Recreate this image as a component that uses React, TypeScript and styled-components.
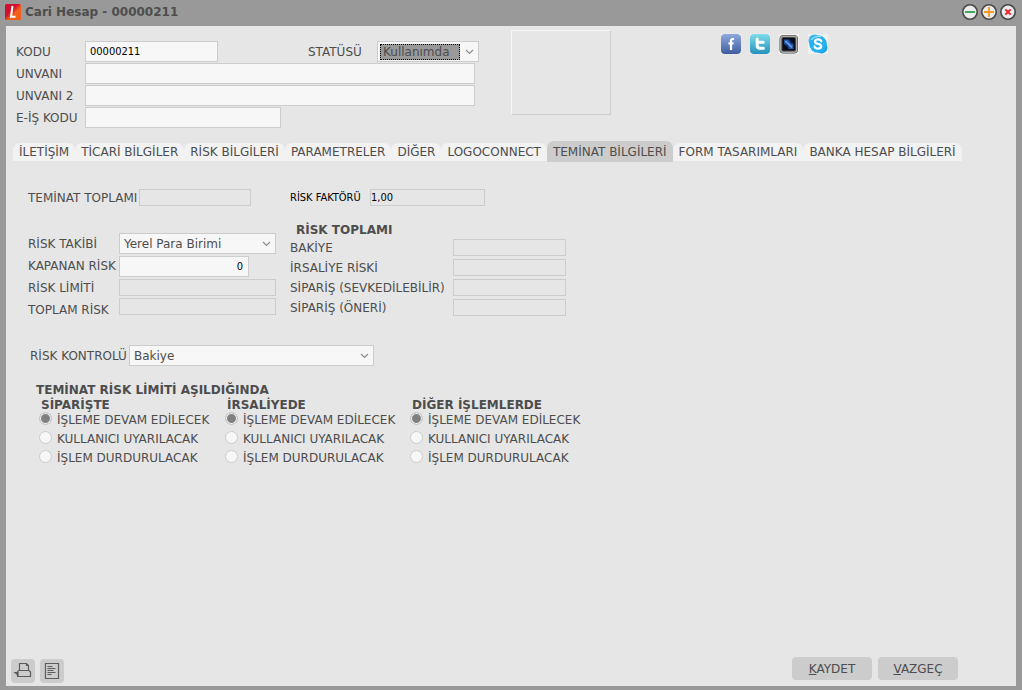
import React from "react";
import styled, { createGlobalStyle } from "styled-components";

const GlobalStyle = createGlobalStyle`
  *, *::before, *::after { box-sizing: border-box; }
  body {
    margin: 0;
    background: #999999;
    color: #4d4d4d;
    font-family: Verdana, "DejaVu Sans", sans-serif;
    font-size: 12px;
    line-height: 16px;
  }
  button, input, select { font: inherit; color: inherit; margin: 0; }
`;

const Window = styled.div`
  display: flex;
  flex-direction: column;
  min-height: 100vh;
  padding: 0 6px 4px;
`;

const TitleBar = styled.header`
  display: flex;
  align-items: center;
  gap: 4px;
  height: 26px;
  padding-bottom: 2px;
  margin-left: -1px;
`;

const Title = styled.h1`
  flex: 1;
  margin: 0;
  font-size: 12px;
  font-weight: bold;
`;

const WindowControls = styled.div`
  display: flex;
  gap: 3px;
`;

const ControlButton = styled.button`
  display: block;
  width: 16px;
  height: 16px;
  padding: 0;
  border: 0;
  background: none;
  svg { display: block; }
`;

const Body = styled.main`
  flex: 1;
  display: flex;
  flex-direction: column;
  background: #e6e6e6;
`;

const Header = styled.section`
  display: flex;
  align-items: flex-start;
  padding: 4px 10px 0;
`;

const Identity = styled.div`
  display: flex;
  flex-direction: column;
  gap: 1px;
  width: 463px;
  margin-top: 11px;
`;

const IdentityRow = styled.div`
  display: flex;
  align-items: center;
`;

const Label = styled.label<{ $width?: number; $compact?: boolean }>`
  flex: none;
  width: ${(p) => (p.$width ? `${p.$width}px` : "auto")};
  white-space: nowrap;
  ${(p) => p.$compact && `color: #000; font-family: Tahoma, "DejaVu Sans Condensed", sans-serif; font-size: 11px;`}
`;

const TextInput = styled.input<{ $width: number }>`
  display: block;
  width: ${(p) => p.$width}px;
  height: 21px;
  padding: 0 4px;
  border: 1px solid #cccccc;
  border-radius: 0;
  outline: 0;
  background: #f7f7f7;
  color: #000;
  font-family: Tahoma, "DejaVu Sans Condensed", sans-serif;
  font-size: 11px;
`;

const AmountInput = styled(TextInput)`
  padding: 0 5px;
  text-align: right;
`;

const LockedInput = styled(TextInput)`
  height: 17px;
  padding: 0;
  background: #e6e6e6;
`;

const SelectBox = styled.div<{ $width: number }>`
  display: flex;
  align-items: center;
  width: ${(p) => p.$width}px;
  height: 21px;
  padding: 2px 4px 2px 2px;
  border: 1px solid #cccccc;
  background: #f7f7f7;
`;

const NativeSelect = styled.select<{ $active?: boolean }>`
  flex: 1;
  min-width: 0;
  height: 16px;
  padding: 0 2px;
  appearance: none;
  border: ${(p) => (p.$active ? "1px dotted #000" : "0")};
  border-radius: 0;
  outline: 0;
  background: ${(p) => (p.$active ? "#999999" : "transparent")};
  line-height: 14px;
`;

const Chevron = styled.svg`
  flex: none;
  margin-left: 5px;
`;

const StatusLabel = styled(Label)`
  margin-left: 90px;
`;

const PictureFrame = styled.div`
  width: 100px;
  height: 85px;
  margin-left: 32px;
  border: 1px solid;
  border-color: #f7f7f7 #cccccc #cccccc #f7f7f7;
`;

const SocialLinks = styled.nav`
  display: flex;
  gap: 9px;
  margin: 4px 0 0 110px;
  a, svg { display: block; }
`;

const TabBar = styled.div`
  display: flex;
  align-items: flex-end;
  margin: 13px 7px 0;
`;

const Tab = styled.button<{ $active?: boolean }>`
  height: ${(p) => (p.$active ? 21 : 18)}px;
  margin-bottom: ${(p) => (p.$active ? 0 : 1)}px;
  padding: 0 6px;
  border: 0;
  border-radius: 7px 7px 0 0;
  background: ${(p) => (p.$active ? "#cccccc" : "#f2f2f2")};
  white-space: nowrap;
`;

const Panel = styled.section`
  padding: 27px 22px 0;
`;

const Columns = styled.div`
  display: grid;
  grid-template-columns: 262px auto;
  justify-content: start;
  row-gap: 17px;
`;

const InlineField = styled.div`
  display: flex;
  align-items: center;
`;

const Pair = styled.div<{ $labels: number }>`
  display: grid;
  grid-template-columns: ${(p) => p.$labels}px auto;
  justify-content: start;
`;

const LabelStack = styled.div<{ $pitch: number }>`
  display: grid;
  grid-auto-rows: ${(p) => p.$pitch}px;
  align-content: start;
  align-items: center;
`;

const FieldStack = styled.div<{ $gap: number }>`
  display: flex;
  flex-direction: column;
  gap: ${(p) => p.$gap}px;
`;

const RiskTracking = styled(Pair)`
  margin-top: 10px;
`;

const Totals = styled(Pair)`
  ${FieldStack} { padding-top: 1px; }
`;

const Heading = styled.h2`
  margin: 0;
  padding-left: 6px;
  font-size: 12px;
  font-weight: bold;
  line-height: 15px;
`;

const RiskControl = styled(InlineField)`
  margin: 24px 0 0 2px;
`;

const LimitSection = styled.div`
  margin: 17px 0 0 2px;
`;

const OptionColumns = styled.div`
  display: grid;
  grid-template-columns: 186px 185px auto;
  justify-content: start;
  padding-left: 9px;
`;

const OptionGroup = styled.fieldset`
  min-width: 0;
  margin: 0;
  padding: 0;
  border: 0;
`;

const Legend = styled.legend`
  padding: 0 2px;
  font-weight: bold;
  line-height: 14px;
`;

const Option = styled.label`
  display: flex;
  align-items: flex-start;
  gap: 5px;
  height: 19px;
  white-space: nowrap;
`;

const Radio = styled.input`
  flex: none;
  width: 13px;
  height: 13px;
  appearance: none;
  border: 1px solid #cccccc;
  border-radius: 50%;
  background: #f7f7f7;
  &:checked {
    background: #808080;
    box-shadow: inset 0 0 0 1px #f7f7f7;
  }
`;

const Footer = styled.footer`
  display: flex;
  justify-content: space-between;
  align-items: flex-end;
  margin-top: auto;
  padding: 0 58px 3px 5px;
`;

const ButtonRow = styled.div<{ $gap: number }>`
  display: flex;
  gap: ${(p) => p.$gap}px;
`;

const IconButton = styled.button`
  display: flex;
  width: 24px;
  height: 24px;
  padding: 0;
  border: 0;
  border-radius: 4px;
  background: #cccccc;
`;

const ActionButton = styled.button`
  width: 80px;
  height: 23px;
  margin-bottom: 3px;
  padding: 0;
  border: 0;
  border-radius: 4px;
  background: #cccccc;
  text-align: center;
`;

const tabs = [
  "İLETİŞİM",
  "TİCARİ BİLGİLER",
  "RİSK BİLGİLERİ",
  "PARAMETRELER",
  "DİĞER",
  "LOGOCONNECT",
  "TEMİNAT BİLGİLERİ",
  "FORM TASARIMLARI",
  "BANKA HESAP BİLGİLERİ",
];

const totals = ["BAKİYE", "İRSALİYE RİSKİ", "SİPARİŞ (SEVKEDİLEBİLİR)", "SİPARİŞ (ÖNERİ)"];
const groups = ["SİPARİŞTE", "İRSALİYEDE", "DİĞER İŞLEMLERDE"];
const options = ["İŞLEME DEVAM EDİLECEK", "KULLANICI UYARILACAK", "İŞLEM DURDURULACAK"];

function Select({ id, width, value, active }: { id: string; width: number; value: string; active?: boolean }) {
  return (
    <SelectBox $width={width}>
      <NativeSelect id={id} $active={active} defaultValue={value}>
        <option>{value}</option>
      </NativeSelect>
      <Chevron width="9" height="6" viewBox="0 0 9 6" fill="none" stroke="#8c8c8c" strokeWidth="1.2">
        <path d="M1 1l3.5 3.5L8 1" />
      </Chevron>
    </SelectBox>
  );
}

function Control({ label, color, path }: { label: string; color: string; path: string }) {
  return (
    <ControlButton type="button" aria-label={label}>
      <svg width="16" height="16" viewBox="0 0 16 16">
        <circle cx="8" cy="8" r="7.2" fill="#ececec" stroke="#484848" strokeWidth="1.6" />
        <path d={path} stroke={color} strokeWidth="1.9" fill="none" />
      </svg>
    </ControlButton>
  );
}

function AppLogo() {
  return (
    <svg width="16" height="16" viewBox="0 0 16 16">
      <defs>
        <linearGradient id="logo" x1="0" y1="0" x2="1" y2="1">
          <stop offset="0.4" stopColor="#d0102c" />
          <stop offset="0.6" stopColor="#f0601a" />
        </linearGradient>
      </defs>
      <rect width="16" height="16" rx="1.5" fill="url(#logo)" />
      <path d="M7.5 2L6 12.7h4.5" fill="none" stroke="#fff" strokeWidth="2" />
    </svg>
  );
}

function SocialIcons() {
  return (
    <SocialLinks>
      <a href="#facebook" aria-label="Facebook">
        <svg width="20" height="20" viewBox="0 0 20 20">
          <defs>
            <linearGradient id="fb" x1="0" y1="0" x2="0" y2="1">
              <stop offset="0" stopColor="#8fa9dc" />
              <stop offset="1" stopColor="#3f5c9f" />
            </linearGradient>
          </defs>
          <rect width="20" height="20" fill="#f4f4f4" />
          <rect width="20" height="20" rx="4" fill="url(#fb)" />
          <path d="M13 5h-1.2Q10 5 10 7v9M7.5 9.3h5" fill="none" stroke="#fff" strokeWidth="2.2" />
        </svg>
      </a>
      <a href="#twitter" aria-label="Twitter">
        <svg width="20" height="20" viewBox="0 0 20 20">
          <defs>
            <linearGradient id="tw" x1="0" y1="0" x2="0" y2="1">
              <stop offset="0" stopColor="#7fdcea" />
              <stop offset="1" stopColor="#2293bb" />
            </linearGradient>
          </defs>
          <rect width="20" height="20" fill="#f4f4f4" />
          <rect width="20" height="20" rx="4" fill="url(#tw)" />
          <path d="M7.2 5v6.5Q7.2 14.2 10 14.2h3.4M7.2 8.2h6" fill="none" stroke="#fff" strokeWidth="3" strokeLinecap="round" />
        </svg>
      </a>
      <a href="#friendfeed" aria-label="Web">
        <svg width="20" height="20" viewBox="0 0 20 20">
          <rect width="20" height="20" fill="#f4f4f4" />
          <rect x="0.5" y="1" width="18.500" height="18.500" rx="4" fill="#484848" />
          <rect x="1.700" y="2.200" width="16" height="16" rx="2.500" fill="none" stroke="#aaaaaa" strokeWidth="1.400" />
          <rect x="3.500" y="4" width="12.500" height="12.500" rx="1" fill="#080d18" />
          <path d="M5 5.500h5.500L14.500 10.500V15h-4.500L5 10z" fill="#2456a8" />
          <path d="M6.500 7l6.500 6.500" stroke="#6fa3ea" strokeWidth="1.600" />
          <path d="M10.500 5.500l1.500 3 2 .5M5 10.500l3 1 1 3" fill="none" stroke="#0b1e50" strokeWidth="1.300" />
        </svg>
      </a>
      <a href="#skype" aria-label="Skype">
        <svg width="20" height="20" viewBox="0 0 20 20">
          <rect width="20" height="20" fill="#f1f1f1" />
          <circle cx="6.500" cy="6.500" r="6" fill="#3cb8f0" />
          <circle cx="13.500" cy="13.500" r="6" fill="#1aa4e6" />
          <circle cx="10" cy="10" r="8.700" fill="#22b0ee" />
          <path d="M3 6Q7 1.500 13 2.500" fill="none" stroke="#9be0fb" strokeWidth="1.300" />
          <path d="M13.300 7.300Q12.800 5.400 10 5.400T7 7.500Q7 9.300 10 9.900T13.200 12.300Q13.200 14.600 10 14.600T6.600 12.500" fill="none" stroke="#fff" strokeWidth="2.300" strokeLinecap="round" />
        </svg>
      </a>
    </SocialLinks>
  );
}

export default function App() {
  return (
    <>
      <GlobalStyle />
      <Window>
        <TitleBar>
          <AppLogo />
          <Title>Cari Hesap - 00000211</Title>
          <WindowControls>
            <Control label="Küçült" color="#35a853" path="M3 8h10" />
            <Control label="Büyüt" color="#f59a23" path="M3 8h10M8 3v10" />
            <Control label="Kapat" color="#ee1c24" path="M5.300 5.300l5.400 5.400M10.700 5.300l-5.400 5.400" />
          </WindowControls>
        </TitleBar>

        <Body>
          <Header>
            <Identity>
              <IdentityRow>
                <Label htmlFor="code" $width={69}>KODU</Label>
                <TextInput id="code" $width={133} defaultValue="00000211" />
                <StatusLabel htmlFor="status" $width={69}>STATÜSÜ</StatusLabel>
                <Select id="status" width={102} value="Kullanımda" active />
              </IdentityRow>
              <IdentityRow>
                <Label htmlFor="name" $width={69}>UNVANI</Label>
                <TextInput id="name" $width={390} />
              </IdentityRow>
              <IdentityRow>
                <Label htmlFor="name2" $width={69}>UNVANI 2</Label>
                <TextInput id="name2" $width={390} />
              </IdentityRow>
              <IdentityRow>
                <Label htmlFor="ecode" $width={69}>E-İŞ KODU</Label>
                <TextInput id="ecode" $width={196} />
              </IdentityRow>
            </Identity>
            <PictureFrame />
            <SocialIcons />
          </Header>

          <TabBar role="tablist">
            {tabs.map((tab, i) => (
              <Tab key={tab} type="button" role="tab" aria-selected={i === 6} $active={i === 6}>
                {tab}
              </Tab>
            ))}
          </TabBar>

          <Panel>
            <Columns>
              <InlineField>
                <Label htmlFor="collateral" $width={111}>TEMİNAT TOPLAMI</Label>
                <LockedInput id="collateral" $width={112} readOnly />
              </InlineField>
              <InlineField>
                <Label htmlFor="factor" $width={80} $compact>RİSK FAKTÖRÜ</Label>
                <LockedInput id="factor" $width={115} readOnly value="1,00" />
              </InlineField>

              <RiskTracking $labels={91}>
                <LabelStack $pitch={22}>
                  <Label htmlFor="tracking">RİSK TAKİBİ</Label>
                  <Label htmlFor="closed">KAPANAN RİSK</Label>
                  <Label htmlFor="limit">RİSK LİMİTİ</Label>
                  <Label htmlFor="total">TOPLAM RİSK</Label>
                </LabelStack>
                <FieldStack $gap={2}>
                  <Select id="tracking" width={157} value="Yerel Para Birimi" />
                  <AmountInput id="closed" $width={130} defaultValue="0" />
                  <LockedInput id="limit" $width={157} readOnly />
                  <LockedInput id="total" $width={157} readOnly />
                </FieldStack>
              </RiskTracking>
              <div>
                <Heading>RİSK TOPLAMI</Heading>
                <Totals $labels={163}>
                  <LabelStack $pitch={20}>
                    {totals.map((name, i) => (
                      <Label key={name} htmlFor={`sum${i}`}>{name}</Label>
                    ))}
                  </LabelStack>
                  <FieldStack $gap={3}>
                    {totals.map((name, i) => (
                      <LockedInput key={name} id={`sum${i}`} $width={113} readOnly />
                    ))}
                  </FieldStack>
                </Totals>
              </div>
            </Columns>

            <RiskControl>
              <Label htmlFor="control" $width={99}>RİSK KONTROLÜ</Label>
              <Select id="control" width={245} value="Bakiye" />
            </RiskControl>

            <LimitSection>
              <Heading>TEMİNAT RİSK LİMİTİ AŞILDIĞINDA</Heading>
              <OptionColumns>
                {groups.map((group) => (
                  <OptionGroup key={group}>
                    <Legend>{group}</Legend>
                    {options.map((option, i) => (
                      <Option key={option}>
                        <Radio type="radio" name={group} defaultChecked={i === 0} />
                        {option}
                      </Option>
                    ))}
                  </OptionGroup>
                ))}
              </OptionColumns>
            </LimitSection>
          </Panel>

          <Footer>
            <ButtonRow $gap={5}>
              <IconButton type="button" aria-label="Yazdır">
                <svg width="24" height="24" viewBox="0 0 24 24" fill="none" stroke="#5c5c5c" strokeWidth="1.200">
                  <path d="M8.500 11.500v-7h7l2 2v5M15.500 4.500v2h2" />
                  <path d="M7.500 11.500h10.500l1.500 1.500v4.500h-13v-4.500z" />
                  <path d="M4 13.500h3v2.500z" fill="#5c5c5c" />
                </svg>
              </IconButton>
              <IconButton type="button" aria-label="Rapor">
                <svg width="24" height="24" viewBox="0 0 24 24" fill="none" stroke="#5c5c5c">
                  <path d="M5.500 4.500h13v15h-13z" strokeWidth="1.200" />
                  <path d="M7.500 7.500h5M7.500 9.500h8M7.500 11.500h6M7.500 13.500h8M7.500 15.500h4" />
                </svg>
              </IconButton>
            </ButtonRow>
            <ButtonRow $gap={6}>
              <ActionButton type="button"><u>K</u>AYDET</ActionButton>
              <ActionButton type="button"><u>V</u>AZGEÇ</ActionButton>
            </ButtonRow>
          </Footer>
        </Body>
      </Window>
    </>
  );
}
